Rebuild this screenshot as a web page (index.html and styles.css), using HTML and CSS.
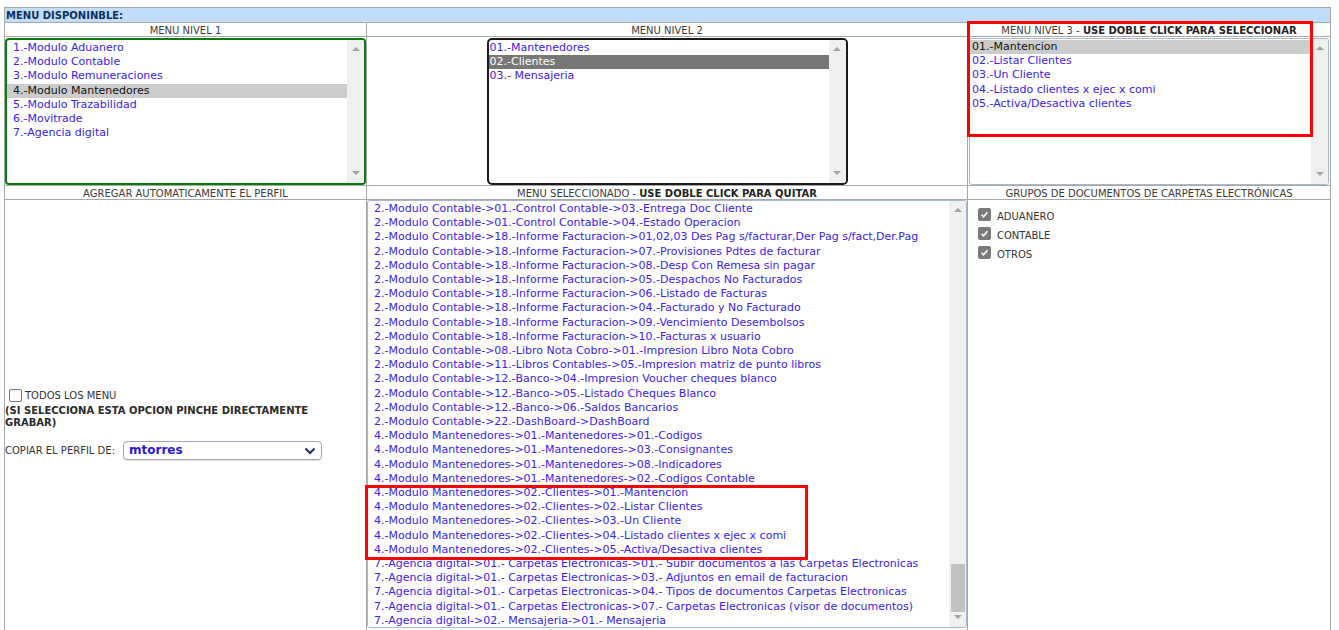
FILE: index.html
```html
<!DOCTYPE html>
<html lang="es">
<head>
<meta charset="utf-8">
<title>Menu disponible</title>
<link rel="stylesheet" href="styles.css">
</head>
<body>
<div class="page">
  <div class="title">MENU DISPONINBLE:</div>
  <div class="grid">
    <div class="head">MENU NIVEL 1</div>
    <div class="head">MENU NIVEL 2</div>
    <div class="head">MENU NIVEL 3 - <b>USE DOBLE CLICK PARA SELECCIONAR</b></div>

    <div class="cell">
      <div class="listbox lb1">
        <ul class="items">
          <li>1.-Modulo Aduanero</li>
          <li>2.-Modulo Contable</li>
          <li>3.-Modulo Remuneraciones</li>
          <li class="sel">4.-Modulo Mantenedores</li>
          <li>5.-Modulo Trazabilidad</li>
          <li>6.-Movitrade</li>
          <li>7.-Agencia digital</li>
        </ul>
        <div class="sb"><span class="up"></span><span class="track"></span><span class="down"></span></div>
      </div>
    </div>
    <div class="cell center">
      <div class="listbox lb2">
        <ul class="items">
          <li>01.-Mantenedores</li>
          <li class="sel dark">02.-Clientes</li>
          <li>03.- Mensajeria</li>
        </ul>
        <div class="sb"><span class="up"></span><span class="track"></span><span class="down"></span></div>
      </div>
    </div>
    <div class="cell">
      <div class="listbox lb3">
        <ul class="items">
          <li class="sel">01.-Mantencion</li>
          <li>02.-Listar Clientes</li>
          <li>03.-Un Cliente</li>
          <li>04.-Listado clientes x ejec x comi</li>
          <li>05.-Activa/Desactiva clientes</li>
        </ul>
        <div class="sb"><span class="up"></span><span class="track"></span><span class="down"></span></div>
      </div>
    </div>

    <div class="head">AGREGAR AUTOMATICAMENTE EL PERFIL</div>
    <div class="head">MENU SELECCIONADO - <b>USE DOBLE CLICK PARA QUITAR</b></div>
    <div class="head">GRUPOS DE DOCUMENTOS DE CARPETAS ELECTRÓNICAS</div>

    <div class="cell left-opts">
      <label class="todos"><span class="cb"></span>TODOS LOS MENU</label>
      <div class="warn">(SI SELECCIONA ESTA OPCION PINCHE DIRECTAMENTE<br>GRABAR)</div>
      <div class="copy">
        <span>COPIAR EL PERFIL DE:</span>
        <div class="select">mtorres
          <svg class="chev" width="12" height="8" viewBox="0 0 12 8"><path d="M1.5 1.5 L6 6 L10.5 1.5" fill="none" stroke="#1c2a78" stroke-width="2"/></svg>
        </div>
      </div>
    </div>
    <div class="cell">
      <div class="listbox lb4">
        <ul class="items">
          <li>2.-Modulo Contable-&gt;01.-Control Contable-&gt;03.-Entrega Doc Cliente</li>
          <li>2.-Modulo Contable-&gt;01.-Control Contable-&gt;04.-Estado Operacion</li>
          <li>2.-Modulo Contable-&gt;18.-Informe Facturacion-&gt;01,02,03 Des Pag s/facturar,Der Pag s/fact,Der.Pag</li>
          <li>2.-Modulo Contable-&gt;18.-Informe Facturacion-&gt;07.-Provisiones Pdtes de facturar</li>
          <li>2.-Modulo Contable-&gt;18.-Informe Facturacion-&gt;08.-Desp Con Remesa sin pagar</li>
          <li>2.-Modulo Contable-&gt;18.-Informe Facturacion-&gt;05.-Despachos No Facturados</li>
          <li>2.-Modulo Contable-&gt;18.-Informe Facturacion-&gt;06.-Listado de Facturas</li>
          <li>2.-Modulo Contable-&gt;18.-Informe Facturacion-&gt;04.-Facturado y No Facturado</li>
          <li>2.-Modulo Contable-&gt;18.-Informe Facturacion-&gt;09.-Vencimiento Desembolsos</li>
          <li>2.-Modulo Contable-&gt;18.-Informe Facturacion-&gt;10.-Facturas x usuario</li>
          <li>2.-Modulo Contable-&gt;08.-Libro Nota Cobro-&gt;01.-Impresion Libro Nota Cobro</li>
          <li>2.-Modulo Contable-&gt;11.-Libros Contables-&gt;05.-Impresion matriz de punto libros</li>
          <li>2.-Modulo Contable-&gt;12.-Banco-&gt;04.-Impresion Voucher cheques blanco</li>
          <li>2.-Modulo Contable-&gt;12.-Banco-&gt;05.-Listado Cheques Blanco</li>
          <li>2.-Modulo Contable-&gt;12.-Banco-&gt;06.-Saldos Bancarios</li>
          <li>2.-Modulo Contable-&gt;22.-DashBoard-&gt;DashBoard</li>
          <li>4.-Modulo Mantenedores-&gt;01.-Mantenedores-&gt;01.-Codigos</li>
          <li>4.-Modulo Mantenedores-&gt;01.-Mantenedores-&gt;03.-Consignantes</li>
          <li>4.-Modulo Mantenedores-&gt;01.-Mantenedores-&gt;08.-Indicadores</li>
          <li>4.-Modulo Mantenedores-&gt;01.-Mantenedores-&gt;02.-Codigos Contable</li>
          <li>4.-Modulo Mantenedores-&gt;02.-Clientes-&gt;01.-Mantencion</li>
          <li>4.-Modulo Mantenedores-&gt;02.-Clientes-&gt;02.-Listar Clientes</li>
          <li>4.-Modulo Mantenedores-&gt;02.-Clientes-&gt;03.-Un Cliente</li>
          <li>4.-Modulo Mantenedores-&gt;02.-Clientes-&gt;04.-Listado clientes x ejec x comi</li>
          <li>4.-Modulo Mantenedores-&gt;02.-Clientes-&gt;05.-Activa/Desactiva clientes</li>
          <li>7.-Agencia digital-&gt;01.- Carpetas Electronicas-&gt;01.- Subir documentos a las Carpetas Electronicas</li>
          <li>7.-Agencia digital-&gt;01.- Carpetas Electronicas-&gt;03.- Adjuntos en email de facturacion</li>
          <li>7.-Agencia digital-&gt;01.- Carpetas Electronicas-&gt;04.- Tipos de documentos Carpetas Electronicas</li>
          <li>7.-Agencia digital-&gt;01.- Carpetas Electronicas-&gt;07.- Carpetas Electronicas (visor de documentos)</li>
          <li>7.-Agencia digital-&gt;02.- Mensajeria-&gt;01.- Mensajeria</li>
        </ul>
        <div class="sb sb4"><span class="up"></span><span class="track"><span class="thumb"></span></span><span class="down"></span></div>
      </div>
    </div>
    <div class="cell right-opts">
      <label class="grp"><span class="cb on"><svg width="13" height="13" viewBox="0 0 13 13"><path d="M3 6.8 L5.4 9.2 L10 3.8" fill="none" stroke="#fff" stroke-width="1.8"/></svg></span>ADUANERO</label>
      <label class="grp"><span class="cb on"><svg width="13" height="13" viewBox="0 0 13 13"><path d="M3 6.8 L5.4 9.2 L10 3.8" fill="none" stroke="#fff" stroke-width="1.8"/></svg></span>CONTABLE</label>
      <label class="grp"><span class="cb on"><svg width="13" height="13" viewBox="0 0 13 13"><path d="M3 6.8 L5.4 9.2 L10 3.8" fill="none" stroke="#fff" stroke-width="1.8"/></svg></span>OTROS</label>
    </div>
  </div>
  <div class="mark mark-top"></div>
  <div class="mark mark-mid"></div>
</div>
</body>
</html>
```
FILE: styles.css
```css
* { box-sizing: border-box; }
html, body { margin: 0; padding: 0; background: #fff; }
body {
  font-family: "DejaVu Sans", Verdana, sans-serif;
  color: #333;
  overflow: hidden;
  height: 630px;
}
.page {
  position: relative;
  margin: 7px 0 0 4px;
  width: 1327px;
  border: 1px solid #a8a8a8;
  border-bottom: none;
}
.title {
  height: 15px;
  line-height: 15px;
  background: #c2ddfa;
  color: #0d2f5c;
  font-weight: bold;
  font-size: 10px;
  padding-left: 1px;
  border-bottom: 1px solid #a8a8a8;
}
.grid {
  display: grid;
  grid-template-columns: 361px 600px 362px;
  grid-template-rows: 13px 148px 13px 430px;
  column-gap: 1px;
  row-gap: 1px;
  background: #a8a8a8;
}
.head {
  background: #fff;
  text-align: center;
  font-size: 10px;
  line-height: 15px;
  color: #3a3a3a;
  white-space: nowrap;
}
.head b { color: #222; }
.cell { background: #fff; position: relative; }
.center { display: flex; justify-content: center; }

.listbox {
  display: flex;
  background: #fff;
  overflow: hidden;
}
.items {
  list-style: none;
  margin: 0;
  padding: 0;
  flex: 1;
  font-size: 11px;
  line-height: 14.2px;
  color: #3a22e6;
  white-space: nowrap;
  overflow: hidden;
}
.items li { padding-left: 6px; }
.items li.sel { background: #cccccc; color: #111; }
.items li.sel.dark { background: #777777; color: #fff; }

.lb1 {
  margin: 1px 0 0 0;
  width: 361px;
  height: 147px;
  border: 2px solid #0a7a0a;
  border-radius: 4px;
}
.lb1 .items, .lb2 .items { padding-top: 1px; }
.lb2 {
  margin-top: 1px;
  width: 361px;
  height: 147px;
  border: 2px solid #1a1a1a;
  border-radius: 5px;
}
.lb2 .items li { padding-left: 1px; }
.lb3 {
  margin: 1px 0 0 1px;
  width: 360px;
  height: 147px;
  border: 1px solid #a9b8c8;
  border-radius: 3px;
}
.lb3 .items { padding-top: 1px; }
.lb3 .items li { padding-left: 2px; }
.lb4 {
  width: 600px;
  height: 428px;
  border: 1px solid #a9b8c8;
  border-radius: 3px;
}
.lb4 .items { padding-top: 1px; }

.sb {
  width: 17px;
  background: #f0f0f0;
  display: flex;
  flex-direction: column;
  align-items: center;
}
.sb .up, .sb .down {
  width: 0; height: 0;
  border-left: 4px solid transparent;
  border-right: 4px solid transparent;
  flex: none;
}
.sb .up { border-bottom: 4px solid #a3a3a3; margin-top: 7px; }
.sb .down { border-top: 4px solid #a3a3a3; margin-bottom: 8px; }
.sb .track { flex: 1; width: 100%; position: relative; }
.sb4 .track { display: flex; flex-direction: column; justify-content: flex-end; align-items: center; padding-bottom: 3px; }
.sb4 .thumb { width: 14px; height: 48px; background: #c1c1c1; display: block; }

.left-opts {
  display: flex;
  flex-direction: column;
  padding: 189px 0 0 0;
}
.todos {
  display: flex;
  align-items: center;
  font-size: 10px;
  color: #333;
  height: 13px;
}
.cb {
  display: inline-block;
  width: 13px; height: 13px;
  border: 1px solid #767676;
  border-radius: 2px;
  background: #fff;
  margin-right: 3px;
  flex: none;
}
.todos .cb { margin-left: 4px; margin-right: 3px; }
.cb.on { background: #7a7a7a; border-color: #7a7a7a; display: flex; align-items: center; justify-content: center; }
.warn {
  font-size: 10px;
  font-weight: bold;
  color: #2a2a2a;
  line-height: 12px;
  margin-top: 3px;
}
.copy {
  margin-top: 12px;
  display: flex;
  align-items: center;
  font-size: 10px;
  color: #333;
}
.select {
  position: relative;
  margin-left: 8px;
  width: 199px;
  height: 19px;
  border: 1px solid #9aa7b2;
  border-radius: 4px;
  font-size: 12px;
  font-weight: bold;
  color: #2a16d6;
  line-height: 17px;
  padding-left: 5px;
  box-shadow: 0 1px 1px rgba(0,0,0,0.12);
}
.chev { position: absolute; right: 5px; top: 5px; }

.right-opts {
  display: flex;
  flex-direction: column;
  padding: 8px 0 0 10px;
  gap: 6px;
}
.grp {
  display: flex;
  align-items: flex-start;
  font-size: 10px;
  color: #333;
  height: 13px;
  line-height: 18px;
}
.grp .cb { margin-right: 6px; }

.mark {
  position: absolute;
  border: 3px solid #ff0000;
  pointer-events: none;
}
.mark-top { left: 962px; top: 13px; width: 346px; height: 116px; }
.mark-mid { left: 360px; top: 477px; width: 443px; height: 75px; }
```
